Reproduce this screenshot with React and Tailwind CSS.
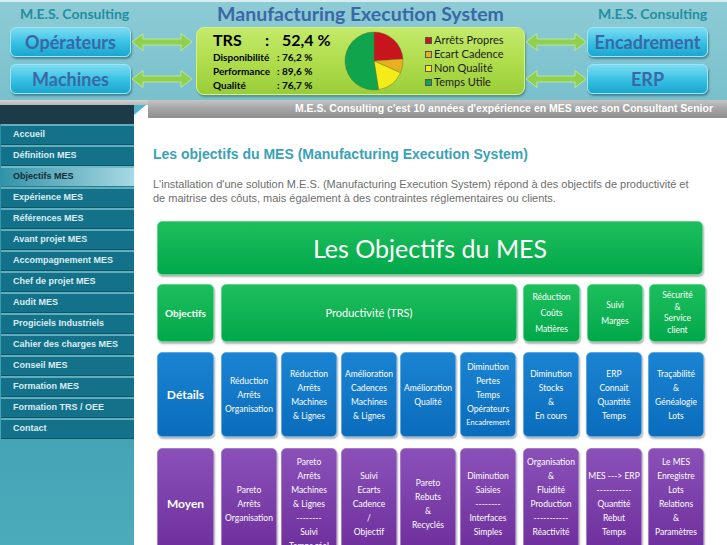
import React from "react";

const calibri = { fontFamily: "Lato, 'Open Sans', sans-serif" };
const arial = { fontFamily: "'Liberation Sans', Arial, sans-serif" };

function Arrow() {
  return (
    <svg width="62" height="20" viewBox="0 0 62 20">
      <path
        d="M1 10 L12 1.5 L12 7 L50 7 L50 1.5 L61 10 L50 18.5 L50 13 L12 13 L12 18.5 Z"
        fill="#8fd14f"
        stroke="#c9eca0"
        strokeWidth="0.8"
      />
    </svg>
  );
}

function CyanBox({ label }) {
  return (
    <div
      className="flex h-[30px] w-[121px] items-center justify-center rounded-[6px] border border-[#9fe6f5] bg-gradient-to-b from-[#7adcf2] via-[#38c2e4] to-[#1aa6cf] text-[18px] font-bold text-[#3a68a6] shadow-[1px_2px_2px_rgba(0,60,80,0.45)]"
      style={calibri}
    >
      {label}
    </div>
  );
}

function pt(cx, cy, r, a) {
  const rad = (a * Math.PI) / 180;
  return [cx + r * Math.sin(rad), cy - r * Math.cos(rad)];
}

function slice(cx, cy, r, a0, a1) {
  const [x0, y0] = pt(cx, cy, r, a0);
  const [x1, y1] = pt(cx, cy, r, a1);
  const large = a1 - a0 > 180 ? 1 : 0;
  return `M${cx} ${cy} L${x0} ${y0} A${r} ${r} 0 ${large} 1 ${x1} ${y1} Z`;
}

function Pie() {
  const parts = [
    [0, 86, "#c8141c"],
    [86, 114, "#e8b020"],
    [114, 171, "#f4ec18"],
    [171, 360, "#10a44c"],
  ];
  return (
    <svg width="60" height="60" viewBox="0 0 60 60">
      {parts.map(([a, b, c]) => (
        <path key={a} d={slice(30, 30, 29, a, b)} fill={c} stroke="#5a6a2a" strokeWidth="0.4" />
      ))}
    </svg>
  );
}

const legend = [
  ["Arrêts Propres", "#c8141c"],
  ["Ecart Cadence", "#e8b020"],
  ["Non Qualité", "#f4ec18"],
  ["Temps Utile", "#10a44c"],
];

function Header() {
  return (
    <div className="h-[100px] bg-gradient-to-b from-[#8dcbd5] to-[#79c0cc] border-t-2 border-[#d9eef2]">
      <div className="flex h-[25px] items-center pb-[2px]" style={calibri}>
        <div className="w-[196px] pl-[20px] text-[14px] font-bold text-[#1f8fa2]">M.E.S. Consulting</div>
        <div className="w-[329px] text-center text-[19.5px] font-bold text-[#3a68a6]">
          Manufacturing Execution System
        </div>
        <div className="pl-[73px] text-[14px] font-bold text-[#1f8fa2]">M.E.S. Consulting</div>
      </div>
      <div className="flex h-[71px]">
        <div className="flex w-[196px] flex-col gap-[7px] pl-[10px]">
          <div className="flex items-center">
            <CyanBox label="Opérateurs" />
            <Arrow />
          </div>
          <div className="flex items-center">
            <CyanBox label="Machines" />
            <Arrow />
          </div>
        </div>
        <div className="flex h-[68px] w-[329px] items-center rounded-[8px] border border-[#d4f08a] bg-gradient-to-b from-[#c4ea6a] via-[#b0dd4c] to-[#9acd3a] pl-[16px] shadow-[1px_2px_2px_rgba(40,80,20,0.4)]">
          <div className="w-[130px] text-black" style={calibri}>
            <div className="flex text-[16px] font-bold leading-[18px]">
              <span className="w-[52px]">TRS</span>
              <span className="w-[16px]">:</span>
              <span className="pl-[1px]">52,4 %</span>
            </div>
            <div className="mt-[1px] grid grid-cols-[64px_auto] text-[10px] font-bold leading-[14px]">
              <span>Disponibilité</span>
              <span>: 76,2 %</span>
              <span>Performance</span>
              <span>: 89,6 %</span>
              <span>Qualité</span>
              <span>: 76,7 %</span>
            </div>
          </div>
          <div className="ml-[1px]">
            <Pie />
          </div>
          <div className="ml-[21px] flex flex-col text-[11px] leading-[14px] text-[#1a1a1a]" style={calibri}>
            {legend.map(([t, c]) => (
              <div key={t} className="flex items-center gap-[2px]">
                <span className="h-[7px] w-[7px] border border-[#555]" style={{ background: c }} />
                <span>{t}</span>
              </div>
            ))}
          </div>
        </div>
        <div className="flex flex-col gap-[7px]">
          <div className="flex items-center">
            <Arrow />
            <CyanBox label="Encadrement" />
          </div>
          <div className="flex items-center">
            <Arrow />
            <CyanBox label="ERP" />
          </div>
        </div>
      </div>
    </div>
  );
}

const menu = [
  "Accueil",
  "Définition MES",
  "Objectifs MES",
  "Expérience MES",
  "Références MES",
  "Avant projet MES",
  "Accompagnement MES",
  "Chef de projet MES",
  "Audit MES",
  "Progiciels Industriels",
  "Cahier des charges MES",
  "Conseil MES",
  "Formation MES",
  "Formation TRS / OEE",
  "Contact",
];

function Sidebar() {
  return (
    <div className="w-[134px] shrink-0 bg-gradient-to-b from-[#2d8ea3] via-[#3d9fb2] to-[#4eacbb]" style={arial}>
      {menu.map((m) => {
        const active = m === "Objectifs MES";
        return (
          <div
            key={m}
            className={
              active
                ? "ml-[1px] flex h-[21px] items-center border-t-2 border-b border-t-[#6fb9c8] border-b-[#2a7d90] bg-gradient-to-r from-[#2f93a9] to-[#a6d9e3] pl-[12px] text-[9px] font-bold text-[#142c36]"
                : "ml-[1px] flex h-[21px] items-center border-t-2 border-b border-t-[#5eaebe] border-b-[#0e5568] bg-[#14718a] pl-[12px] text-[9px] font-bold text-[#dcedf1]"
            }
          >
            {m}
          </div>
        );
      })}
      <div className="h-[130px]" />
    </div>
  );
}

function Box({ color, w, h, lh = 14, children, className = "" }) {
  const styles = {
    green: "bg-gradient-to-b from-[#1cbf5c] to-[#00a84a] border-[#58d68a]",
    blue: "bg-gradient-to-b from-[#1a84d2] to-[#0a6cbc] border-[#5aa8e6]",
    purple: "bg-gradient-to-b from-[#8a50b8] to-[#6c2c9a] border-[#a87ccc]",
  };
  return (
    <div
      className={`flex shrink-0 flex-col items-center justify-center overflow-hidden rounded-[5px] border text-center text-white shadow-[1px_2px_2px_rgba(0,0,0,0.3)] ${styles[color]} ${className}`}
      style={{ ...calibri, width: w, height: h, lineHeight: `${lh}px` }}
    >
      {children}
    </div>
  );
}

function Lines({ items, size = "text-[8.5px]" }) {
  return (
    <div className={`${size} whitespace-nowrap`}>
      {items.map((t, i) => (
        <div key={i} className={t === "Encadrement" ? "text-[7.5px]" : ""}>
          {t || "\u00a0"}
        </div>
      ))}
    </div>
  );
}

const details = [
  ["Réduction", "Arrêts", "Organisation"],
  ["Réduction", "Arrêts", "Machines", "& Lignes"],
  ["Amélioration", "Cadences", "Machines", "& Lignes"],
  ["Amélioration", "Qualité"],
  ["Diminution", "Pertes", "Temps", "Opérateurs", "Encadrement"],
  ["Diminution", "Stocks", "&", "En cours"],
  ["ERP", "Connait", "Quantité", "Temps"],
  ["Traçabilité", "&", "Généalogie", "Lots"],
];

const moyens = [
  ["Pareto", "Arrêts", "Organisation"],
  ["Pareto", "Arrêts", "Machines", "& Lignes", "--------", "Suivi", "Temps réel"],
  ["Suivi", "Ecarts", "Cadence", "/", "Objectif"],
  ["Pareto", "Rebuts", "&", "Recyclés"],
  ["Diminution", "Saisies", "--------", "Interfaces", "Simples"],
  ["Organisation", "&", "Fluidité", "Production", "-----------", "Réactivité", ""],
  ["MES ---> ERP", "-----------", "Quantité", "Rebut", "Temps"],
  ["Le MES", "Enregistre", "Lots", "Relations", "&", "Paramètres", ""],
];

const margins = ["ml-[7px]", "ml-[4px]", "ml-[4px]", "ml-[3px]", "ml-[4px]", "ml-[7px]", "ml-[7px]", "ml-[6px]"];

function Diagram() {
  return (
    <div className="ml-[4px] mt-[16px] w-[546px]">
      <Box color="green" w={546} h={54}>
        <span className="text-[25px]">Les Objectifs du MES</span>
      </Box>
      <div className="mt-[9px] flex">
        <Box color="green" w={57} h={58}>
          <span className="text-[10px] font-bold">Objectifs</span>
        </Box>
        <Box color="green" w={296} h={58} className="ml-[7px]">
          <span className="text-[11px]">Productivité (TRS)</span>
        </Box>
        <Box color="green" w={57} h={58} lh={16} className="ml-[6px]">
          <Lines items={["Réduction", "Coûts", "Matières"]} />
        </Box>
        <Box color="green" w={56} h={58} lh={16} className="ml-[7px]">
          <Lines items={["Suivi", "Marges"]} />
        </Box>
        <Box color="green" w={57} h={58} lh={11.5} className="ml-[6px]">
          <Lines items={["Sécurité", "&", "Service", "client"]} />
        </Box>
      </div>
      <div className="mt-[10px] flex">
        <Box color="blue" w={57} h={85}>
          <span className="text-[12px] font-bold">Détails</span>
        </Box>
        {details.map((d, i) => (
          <Box key={i} color="blue" w={56} h={85} className={margins[i]}>
            <Lines items={d} />
          </Box>
        ))}
      </div>
      <div className="mt-[11px] flex">
        <Box color="purple" w={57} h={112}>
          <span className="text-[12px] font-bold">Moyen</span>
        </Box>
        {moyens.map((d, i) => (
          <Box key={i} color="purple" w={56} h={112} className={margins[i]}>
            <Lines items={d} />
          </Box>
        ))}
      </div>
    </div>
  );
}

export default function App() {
  return (
    <div className="h-[545px] w-[727px] overflow-hidden bg-white">
      <Header />
      <div className="flex h-[24px]">
        <div className="w-[148px] shrink-0">
          <div className="h-[5px] bg-gradient-to-b from-[#d4d4d4] to-[#b6b6b6]" />
          <div className="flex h-[19px]">
            <div className="w-[134px] bg-[#1d3a48]" />
            <div className="h-[10px] w-[12px] bg-[#4fb4cc] [clip-path:polygon(0_0,100%_0,0_100%)]" />
          </div>
        </div>
        <div className="flex-1">
          <div
            className="flex h-[18px] items-center justify-end bg-gradient-to-b from-[#c4c4c4] via-[#a4a4a4] to-[#8e8e8e] pr-[14px] text-[10.5px] font-bold text-white"
            style={arial}
          >
            M.E.S. Consulting c'est 10 années d'expérience en MES avec son Consultant Senior
          </div>
        </div>
      </div>
      <div className="flex">
        <Sidebar />
        <div className="flex-1 pl-[19px] pt-[20px]">
          <h1 className="text-[14px] font-bold text-[#3aa2b5]" style={arial}>
            Les objectifs du MES (Manufacturing Execution System)
          </h1>
          <p className="mt-[12px] text-[11px] leading-[14px] text-[#6e6e6e]" style={arial}>
            L'installation d'une solution M.E.S. (Manufacturing Execution System) répond à des objectifs de productivité et
            <br />
            de maitrise des côuts, mais également à des contraintes réglementaires ou clients.
          </p>
          <Diagram />
        </div>
      </div>
    </div>
  );
}
